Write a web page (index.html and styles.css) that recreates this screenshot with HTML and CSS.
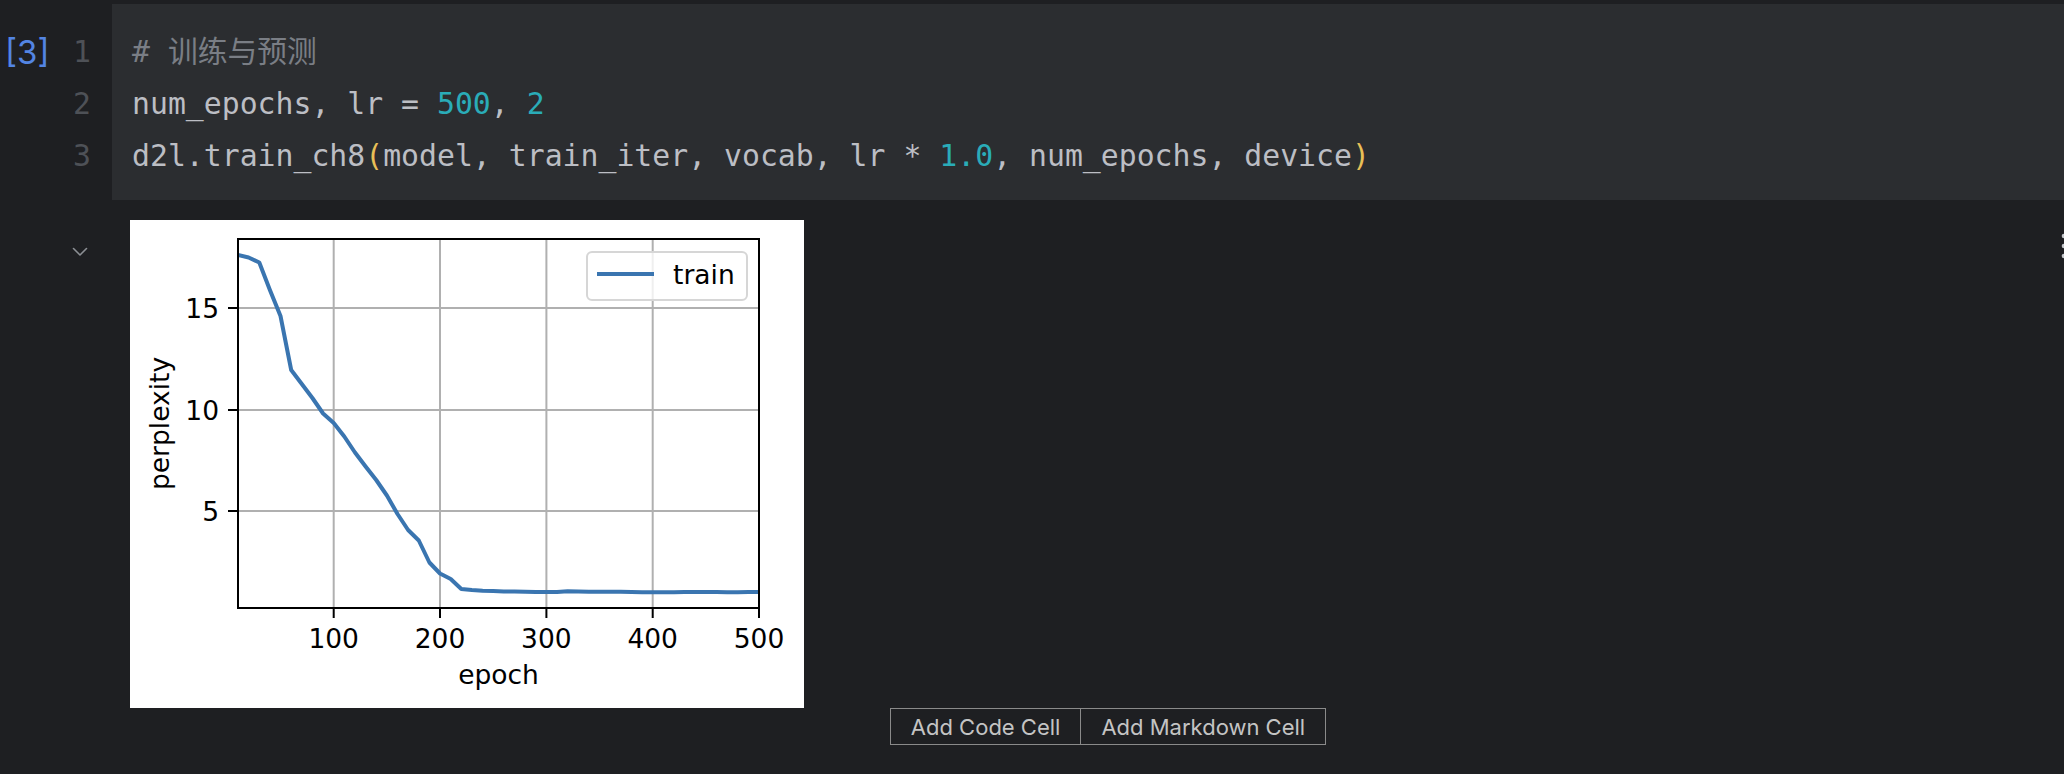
FILE: index.html
```html
<!DOCTYPE html>
<html lang="zh">
<head>
<meta charset="utf-8">
<title>Notebook</title>
<link rel="stylesheet" href="styles.css">
</head>
<body>
<div class="cell">
  <div class="gutter">
    <div class="exec">[3]</div>
    <div class="lnums">
      <div class="ln">1</div>
      <div class="ln">2</div>
      <div class="ln">3</div>
    </div>
  </div>
  <div class="code">
    <div class="line"><span class="cm"># 训练与预测</span></div>
    <div class="line">num_epochs, lr = <span class="num">500</span>, <span class="num">2</span></div>
    <div class="line">d2l.train_ch8<span class="br">(</span>model, train_iter, vocab, lr * <span class="num">1.0</span>, num_epochs, device<span class="br">)</span></div>
  </div>
</div>
<div class="output">
  <div class="out-gutter">
    <svg class="chev" width="16" height="10" viewBox="0 0 16 10"><path d="M1.5 1.5 L8 8 L14.5 1.5" fill="none" stroke="#8c8f94" stroke-width="1.6" stroke-linecap="round" stroke-linejoin="round"/></svg>
  </div>
  <div class="out-body">
    <svg class="plot" width="674" height="488" viewBox="130 220 674 488">
      <defs><clipPath id="ax"><rect x="238" y="239" width="521" height="369"/></clipPath></defs>
      <rect x="130" y="220" width="674" height="488" fill="#ffffff"/>
      <g stroke="#b0b0b0" stroke-width="2">
        <line x1="333.7" y1="239" x2="333.7" y2="608"/>
        <line x1="440" y1="239" x2="440" y2="608"/>
        <line x1="546.4" y1="239" x2="546.4" y2="608"/>
        <line x1="652.7" y1="239" x2="652.7" y2="608"/>
        <line x1="238" y1="308" x2="759" y2="308"/>
        <line x1="238" y1="410" x2="759" y2="410"/>
        <line x1="238" y1="511" x2="759" y2="511"/>
      </g>
      <polyline clip-path="url(#ax)" fill="none" stroke="#3a75b0" stroke-width="4" stroke-linejoin="round" points="238,255 248.6,257.5 259.3,262.5 269.9,290 280.5,316 291.2,370 301.8,384 312.4,398 323.1,413.5 333.7,423 344.3,436.5 355,452.5 365.6,466.5 376.2,480 386.9,495.5 397.5,514 408.1,530 418.8,540.5 429.4,562.5 440,573.5 450.7,579 461.3,589 471.9,590 482.6,590.7 493.2,591 503.8,591.5 514.5,591.6 525.1,591.7 535.7,591.9 546.4,592 557,592 567.6,591.2 578.3,591.6 588.9,591.8 599.5,591.7 610.2,591.8 620.8,591.8 631.4,592 642.1,592.2 652.7,592.2 663.3,592.3 674,592.2 684.6,592 695.2,592 705.9,591.9 716.5,592 727.1,592.2 737.8,592.2 748.4,592.1 759,592"/>
      <rect x="238" y="239" width="521" height="369" fill="none" stroke="#000" stroke-width="2"/>
      <g stroke="#000" stroke-width="2">
        <line x1="228" y1="308" x2="238" y2="308"/>
        <line x1="228" y1="410" x2="238" y2="410"/>
        <line x1="228" y1="511" x2="238" y2="511"/>
        <line x1="333.7" y1="608" x2="333.7" y2="618"/>
        <line x1="440" y1="608" x2="440" y2="618"/>
        <line x1="546.4" y1="608" x2="546.4" y2="618"/>
        <line x1="652.7" y1="608" x2="652.7" y2="618"/>
        <line x1="759" y1="608" x2="759" y2="618"/>
      </g>
      <g class="tick" text-anchor="end">
        <text x="219" y="317.5">15</text>
        <text x="219" y="419.5">10</text>
        <text x="219" y="520.5">5</text>
      </g>
      <g class="tick" text-anchor="middle">
        <text x="333.7" y="648">100</text>
        <text x="440" y="648">200</text>
        <text x="546.4" y="648">300</text>
        <text x="652.7" y="648">400</text>
        <text x="759" y="648">500</text>
      </g>
      <text class="tick" x="498.5" y="684" text-anchor="middle">epoch</text>
      <text class="tick" transform="translate(169,423.5) rotate(-90)" text-anchor="middle">perplexity</text>
      <rect x="587" y="252" width="160" height="48" rx="5" fill="#ffffff" fill-opacity="0.8" stroke="#d6d6d6" stroke-width="2"/>
      <line x1="597" y1="274" x2="654" y2="274" stroke="#3a75b0" stroke-width="4"/>
      <text class="tick" x="673" y="284">train</text>
    </svg>
  </div>
  <svg class="more" width="8" height="30" viewBox="0 0 8 30"><circle cx="4" cy="5" r="2.3" fill="#c4c6ca"/><circle cx="4" cy="15" r="2.3" fill="#c4c6ca"/><circle cx="4" cy="25" r="2.3" fill="#c4c6ca"/></svg>
</div>
<div class="actions">
  <div class="btn-group">
    <button class="btn">Add Code Cell</button>
    <button class="btn btn-second">Add Markdown Cell</button>
  </div>
</div>
</body>
</html>
```
FILE: styles.css
```css
html, body {
  margin: 0;
  padding: 0;
  background: #1e1f22;
  overflow: hidden;
  width: 2064px;
  height: 774px;
}

.cell {
  display: flex;
  margin-top: 4px;
  font-family: "DejaVu Sans Mono", "Noto Sans CJK SC", monospace;
  font-size: 29.8px;
}

.gutter {
  width: 112px;
  flex: none;
  display: flex;
  padding-top: 22px;
  box-sizing: border-box;
}

.exec {
  margin-left: 5px;
  height: 52px;
  line-height: 52px;
  font-family: "Inter", "Liberation Sans", sans-serif;
  font-size: 33px;
  color: #5385e4;
}

.lnums {
  margin-left: auto;
  padding-right: 21px;
  text-align: right;
  color: #4e5157;
}

.ln {
  height: 52px;
  line-height: 52px;
}

.code {
  flex: 1;
  background: #2b2d30;
  padding: 22px 0 18px 20px;
  color: #bcbec4;
}

.line {
  height: 52px;
  line-height: 52px;
  white-space: pre;
}

.cm { color: #7a7e85; }
.num { color: #2aacb8; }
.br { color: #e8bf57; }

.output {
  position: relative;
  display: flex;
}

.out-gutter {
  width: 112px;
  flex: none;
}

.chev {
  display: block;
  margin: 47px 0 0 72px;
}

.out-body {
  padding: 20px 0 0 18px;
}

.plot {
  display: block;
}

.tick {
  font-family: "DejaVu Sans", sans-serif;
  font-size: 26.5px;
  fill: #000;
}

.more {
  position: absolute;
  right: -4px;
  top: 31px;
}

.actions {
  display: flex;
  justify-content: center;
  padding-left: 152px;
}

.btn-group {
  display: flex;
  border: 1.3px solid #8a8a8a;
  height: 37px;
  box-sizing: border-box;
}

.btn {
  background: transparent;
  border: 0;
  margin: 0;
  padding: 0 20px;
  font-family: "Inter", "Liberation Sans", sans-serif;
  font-size: 22px;
  color: #c4c4c4;
  line-height: 34px;
}

.btn-second {
  border-left: 1.3px solid #8a8a8a;
}
```
